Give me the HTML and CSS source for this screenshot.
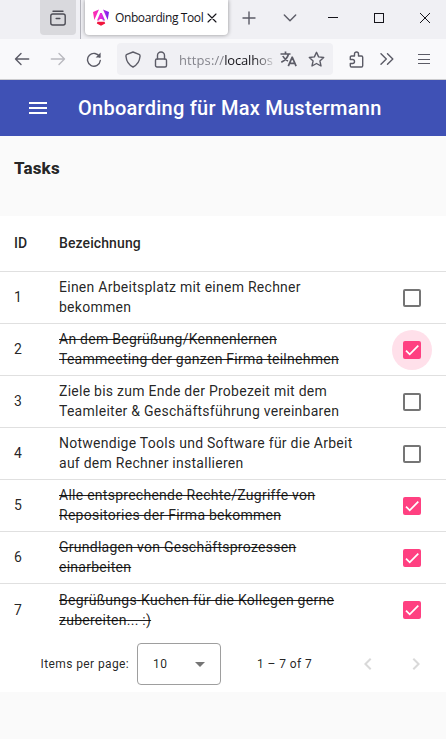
FILE: index.html
```html
<!DOCTYPE html>
<html lang="de">
<head>
<meta charset="utf-8">
<title>Onboarding Tool</title>
<link rel="stylesheet" href="styles.css">
</head>
<body>
<header class="browser">
  <div class="tabbar">
    <div class="view-btn"><svg width="18" height="18" viewBox="0 0 18 18" class="line dark"><path d="M4 2.200H14"/><rect x="1.800" y="5" width="14.400" height="11" rx="2"/><path d="M7.200 9.500H10.800" stroke-width="1.500"/></svg></div>
    <span class="tab-sep"></span>
    <div class="tab">
      <svg width="16" height="17" viewBox="0 0 16 17">
        <defs><linearGradient id="ng" x1="0" y1="0" x2="1" y2="0"><stop offset="0" stop-color="#ff2aa8"/><stop offset=".5" stop-color="#e62bdd"/><stop offset="1" stop-color="#7020f0"/></linearGradient></defs>
        <path fill="url(#ng)" d="M6 .5 1.300 11 0 3ZM10 .5l4.700 10.500L16 3ZM7.200 4h1.600l3.200 7.400H9.900L9.300 10H6.700l-.6 1.400H4Z"/>
        <path fill="#f0143c" d="M4.500 12.700h7l.7 1.700L8 16.700l-4.200-2.300Z"/>
      </svg>
      <span class="tab-title">Onboarding Tool</span>
      <svg width="10" height="10" viewBox="0 0 10 10" class="line black"><path d="M1 1 9 9M9 1 1 9"/></svg>
    </div>
    <div class="slot new-tab"><svg width="14" height="14" viewBox="0 0 14 14" class="line"><path d="M7 1V13M1 7H13"/></svg></div>
    <div class="slot all-tabs"><svg width="14" height="8" viewBox="0 0 14 8" class="line"><path d="M1.300 1 7 6.700 12.700 1"/></svg></div>
    <div class="slot win"><svg width="10" height="10" viewBox="0 0 10 10" class="line black crisp"><path d="M0 4.500H10"/></svg></div>
    <div class="slot win"><svg width="10" height="10" viewBox="0 0 10 10" class="line black crisp"><path d="M.5 .5h9v9h-9Z"/></svg></div>
    <div class="slot win"><svg width="10" height="10" viewBox="0 0 10 10" class="line black thin"><path d="M0 0 10 10M10 0 0 10"/></svg></div>
  </div>
  <div class="toolbar">
    <div class="slot nav"><svg width="16" height="14" viewBox="0 0 16 14" class="line"><path d="M7 1.500 1.500 7 7 12.500M1.500 7H14.700"/></svg></div>
    <div class="slot nav faded"><svg width="16" height="14" viewBox="0 0 16 14" class="line"><path d="M9 1.500 14.500 7 9 12.500M14.500 7H1.300"/></svg></div>
    <div class="slot nav"><svg width="16" height="16" viewBox="0 0 16 16" class="line"><path d="M13.700 6A6.400 6.400 0 1 0 14.300 9.500"/><path d="M14.600 1.500V6.500H9.600Z" fill="#5b5b66" stroke="none"/></svg></div>
    <div class="url">
      <div class="slot shield"><svg width="16" height="17" viewBox="0 0 16 17" class="line"><path d="M8 1 14 3.400Q15.300 3.900 15 5.500C14.600 10 12.500 13.800 8 16 3.500 13.800 1.400 10 1 5.500Q.7 3.900 2 3.400Z"/></svg></div>
      <div class="slot lock"><svg width="14" height="17" viewBox="0 0 14 17" class="line"><rect x="1.500" y="8" width="11" height="8" rx="1.500"/><path d="M3.500 8V4.500a3.500 3.500 0 0 1 7 0V8"/></svg></div>
      <span class="address">https://<b>localhos</b></span>
      <div class="slot action"><svg width="17" height="16" viewBox="0 0 17 16" class="line translate"><path d="M.5 3H10.500M5.500 .5V3M8.500 3C7.700 6.500 4.800 9.500 1.300 11.300M2.800 5C4 7.500 6 9.200 8 10M8.300 15.200 12.200 6.200 16.100 15.200M9.600 12.300H14.800"/></svg></div>
      <div class="slot action"><svg width="17" height="17" viewBox="0 0 17 17" class="line"><path d="M8.500 1.300 10.600 5.900 15.700 6.500 11.900 9.900 13 15 8.500 12.500 4 15 5.100 9.900 1.300 6.500 6.400 5.900Z"/></svg></div>
    </div>
    <div class="slot puzzle"><svg width="15" height="17" viewBox="0 0 15 17" class="line"><path d="M5.500 5V3a2 2 0 0 1 4 0v2H12.500a1.200 1.200 0 0 1 1.200 1.200V14.800a1.200 1.200 0 0 1-1.200 1.200H2.500a1.200 1.200 0 0 1-1.200-1.200V12.500H3.500a2 2 0 0 0 0-4H1.300V6.200A1.200 1.200 0 0 1 2.500 5Z"/></svg></div>
    <div class="slot more"><svg width="14" height="12" viewBox="0 0 14 12" class="line"><path d="M1 .7 6.300 6 1 11.300M7.500 .7 12.800 6 7.500 11.300"/></svg></div>
    <div class="slot menu"><svg width="12" height="11" viewBox="0 0 12 11" class="line crisp"><path d="M0 .5H12M0 5.500H12M0 9.500H12"/></svg></div>
  </div>
</header>
<div class="appbar">
  <svg width="18" height="12" viewBox="0 0 18 12" fill="#fff"><path d="M0 0h18v2H0ZM0 5h18v2H0ZM0 10h18v2H0Z"/></svg>
  <h1>Onboarding für Max Mustermann</h1>
</div>
<main>
  <h2>Tasks</h2>
  <section class="panel">
    <div class="row head"><span>ID</span><span>Bezeichnung</span></div>
    <div class="row"><span>1</span><span class="name">Einen Arbeitsplatz mit einem Rechner<br>bekommen</span><i class="box"></i></div>
    <div class="row done"><span>2</span><span class="name">An dem Begrüßung/Kennenlernen<br>Teammeeting der ganzen Firma teilnehmen</span><i class="box focus"><svg viewBox="0 0 24 24"><path d="M1.730 12.910 8.100 19.280 22.790 4.590"/></svg></i></div>
    <div class="row"><span>3</span><span class="name">Ziele bis zum Ende der Probezeit mit dem<br>Teamleiter &amp; Geschäftsführung vereinbaren</span><i class="box"></i></div>
    <div class="row"><span>4</span><span class="name">Notwendige Tools und Software für die Arbeit<br>auf dem Rechner installieren</span><i class="box"></i></div>
    <div class="row done"><span>5</span><span class="name">Alle entsprechende Rechte/Zugriffe von<br>Repositories der Firma bekommen</span><i class="box"><svg viewBox="0 0 24 24"><path d="M1.730 12.910 8.100 19.280 22.790 4.590"/></svg></i></div>
    <div class="row done"><span>6</span><span class="name">Grundlagen von Geschäftsprozessen<br>einarbeiten</span><i class="box"><svg viewBox="0 0 24 24"><path d="M1.730 12.910 8.100 19.280 22.790 4.590"/></svg></i></div>
    <div class="row done last"><span>7</span><span class="name">Begrüßungs-Kuchen für die Kollegen gerne<br>zubereiten... :)</span><i class="box"><svg viewBox="0 0 24 24"><path d="M1.730 12.910 8.100 19.280 22.790 4.590"/></svg></i></div>
    <div class="paginator">
      <span class="label">Items per page:</span>
      <div class="select"><span>10</span><svg width="10" height="5" viewBox="0 0 10 5"><path d="M0 0H10L5 5Z" fill="#757575"/></svg></div>
      <span class="range">1 – 7 of 7</span>
      <svg class="arrow" width="8" height="12" viewBox="0 0 8 12"><path d="M6.700 .7 1.400 6 6.700 11.300"/></svg>
      <svg class="arrow" width="8" height="12" viewBox="0 0 8 12"><path d="M1.300 .7 6.600 6 1.300 11.300"/></svg>
    </div>
  </section>
</main>
</body>
</html>
```
FILE: styles.css
```css
* { box-sizing: border-box; }
body {
  margin: 0;
  height: 739px;
  overflow: hidden;
  background: #fafafa;
  color: rgba(0, 0, 0, 0.87);
  font-family: Roboto, sans-serif;
}
svg { display: block; flex: none; }
.line { fill: none; stroke: #5b5b66; stroke-width: 1.4; stroke-linecap: round; stroke-linejoin: round; }
.dark { stroke: #4c4c55; }
.black { stroke: #15141a; stroke-width: 1.1; }
.thin { stroke-width: 1; }
.crisp { stroke-width: 1; stroke-linecap: butt; shape-rendering: crispEdges; }
.translate { stroke-width: 1.7; stroke-linecap: butt; }

/* Browser window */
.browser { height: 80px; border-bottom: 1px solid #cccccf; background: #f9f9fb; }
.tabbar { display: flex; height: 39px; padding-left: 40px; background: #f0f0f4; overflow: hidden; }
.view-btn { display: flex; align-items: center; justify-content: center; flex: none; width: 36px; height: 35px; border-radius: 0 0 4px 4px; background: #d9d9dd; }
.tab-sep { flex: none; width: 1px; height: 39px; margin: 0 4px; background: #b5b5bd; }
.tab { display: flex; align-items: center; flex: none; width: 143px; height: 35px; padding-left: 8px; border-radius: 0 0 4px 4px; background: #fff; box-shadow: 0 0 4px rgba(0, 0, 0, 0.4); }
.tab-title { flex: none; width: 91px; margin: 0 1px 0 6px; color: #15141a; font: 12px "Open Sans", sans-serif; letter-spacing: -0.4px; white-space: nowrap; }
.slot { display: flex; align-items: center; justify-content: center; flex: none; }
.tabbar .slot { height: 35px; }
.new-tab { width: 42px; }
.all-tabs { width: 40px; }
.win { width: 46px; }
.toolbar { display: flex; align-items: center; height: 40px; padding-left: 4px; }
.nav { width: 36px; }
.faded { opacity: 0.4; }
.url { display: flex; align-items: center; flex: none; width: 216px; height: 32px; margin: 0 8px 0 5px; border-radius: 4px; background: #f0f0f4; }
.shield { width: 32px; }
.lock { width: 24px; }
.address { flex: none; width: 94px; margin: 2px 1px 0 6px; color: #85858d; font: 13px "Open Sans", sans-serif; letter-spacing: 0.1px; white-space: nowrap; -webkit-mask-image: linear-gradient(90deg, #000 74px, transparent 98px); mask-image: linear-gradient(90deg, #000 74px, transparent 98px); }
.address b { color: #15141a; font-weight: 400; letter-spacing: -0.15px; }
.action { width: 28px; }
.puzzle { width: 30px; }
.more { width: 32px; }
.menu { width: 32px; margin-left: 5px; }

/* Application */
.appbar { display: flex; align-items: center; gap: 31px; height: 56px; padding-left: 29px; background: #3f51b5; color: #fff; }
h1 { margin: 0; font-size: 20px; font-weight: 500; line-height: 32px; letter-spacing: 0.25px; }
h2 { height: 80px; margin: 0; padding: 16px 14px; font-size: 17px; font-weight: 800; line-height: 32px; letter-spacing: 0.15px; }
.panel { height: 476px; background: #fff; isolation: isolate; }
.row { display: grid; grid-template-columns: 45px 1fr 40px; align-items: center; height: 52px; padding: 0 14px 1px; border-bottom: 1px solid #e0e0e0; font-size: 14px; line-height: 20px; letter-spacing: 0.26px; }
.head { height: 56px; font-weight: 500; letter-spacing: 0.1px; }
.name { white-space: nowrap; }
.done .name { text-decoration: line-through; }
.box { position: relative; justify-self: center; width: 18px; height: 18px; margin-top: 2px; border: 2px solid #757575; border-radius: 2px; }
.done .box { border-color: #ff4081; background: #ff4081; }
.box svg { width: 14px; height: 14px; fill: none; stroke: #fff; stroke-width: 3; }
.focus::before { content: ""; position: absolute; inset: -13px; z-index: -1; border-radius: 50%; background: #ffe0ea; }
.last { padding-bottom: 0; border-bottom: 0; }
.last .box { margin-top: 0; }
.paginator { display: flex; align-items: center; height: 56px; padding-left: 40px; font-size: 12px; letter-spacing: 0.4px; }
.label { flex: none; width: 97px; padding-left: 0.5px; white-space: nowrap; }
.select { display: flex; align-items: center; justify-content: space-between; flex: none; width: 84px; height: 42px; padding: 0 15px; border: 1px solid #9e9e9e; border-radius: 4px; }
.range { flex: none; width: 107px; margin-left: 36px; }
.arrow { margin-right: 40px; fill: none; stroke: #d9d9d9; stroke-width: 2; }
.arrow:last-child { margin-right: 0; }
```
